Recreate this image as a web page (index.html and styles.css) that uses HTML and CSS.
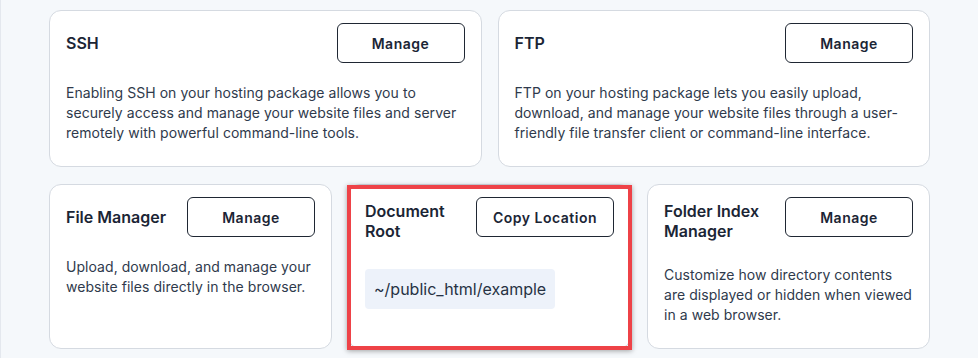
FILE: index.html
```html
<!DOCTYPE html>
<html lang="en">
<head>
    <meta charset="UTF-8">
    <meta name="viewport" content="width=device-width, initial-scale=1.0">
    <title>Hosting Tools</title>
    <link rel="stylesheet" href="styles.css">
</head>
<body>
    <div class="page">
        <!-- Linha 1: acesso remoto -->
        <div class="row row-two">
            <div class="card">
                <div class="card-head">
                    <h3 class="card-title">SSH</h3>
                    <button class="btn btn-wide">Manage</button>
                </div>
                <p class="card-text">Enabling SSH on your hosting package allows you to securely access and manage your website files and server remotely with powerful command-line tools.</p>
            </div>
            <div class="card">
                <div class="card-head">
                    <h3 class="card-title">FTP</h3>
                    <button class="btn btn-wide">Manage</button>
                </div>
                <p class="card-text">FTP on your hosting package lets you easily upload, download, and manage your website files through a user-friendly file transfer client or command-line interface.</p>
            </div>
        </div>

        <!-- Linha 2: arquivos -->
        <div class="row row-three">
            <div class="card">
                <div class="card-head">
                    <h3 class="card-title">File Manager</h3>
                    <button class="btn btn-wide">Manage</button>
                </div>
                <p class="card-text">Upload, download, and manage your website files directly in the browser.</p>
            </div>
            <div class="card highlight">
                <div class="card-head">
                    <h3 class="card-title">Document Root</h3>
                    <button class="btn">Copy Location</button>
                </div>
                <div class="path">~/public_html/example</div>
            </div>
            <div class="card">
                <div class="card-head">
                    <h3 class="card-title">Folder Index Manager</h3>
                    <button class="btn btn-wide">Manage</button>
                </div>
                <p class="card-text">Customize how directory contents are displayed or hidden when viewed in a web browser.</p>
            </div>
        </div>
    </div>
</body>
</html>
```

FILE: styles.css
```css
body {
    font-family: 'Inter', 'Noto Sans', sans-serif;
    background-color: #f5f8fb;
    margin: 0;
    padding: 0;
    border-left: 1px solid #e4e8ee;
    min-height: 358px;
    box-sizing: border-box;
}

.page {
    width: 881px;
    padding: 10px 0 0 48px;
    display: flex;
    flex-direction: column;
    gap: 17px;
}

.row {
    display: grid;
    gap: 16px;
}

.row-two {
    grid-template-columns: 1fr 1fr;
}

.row-three {
    grid-template-columns: 1fr 1fr 1fr;
}

.card {
    position: relative;
    background-color: #fff;
    border: 1px solid #d5dae1;
    border-radius: 12px;
    padding: 12px 16px 23px;
}

.card-head {
    display: flex;
    justify-content: space-between;
    align-items: center;
    gap: 16px;
}

.card-title {
    margin: 4px 0;
    font-size: 16px;
    line-height: 20px;
    font-weight: 600;
    color: #1b2535;
}

.btn {
    align-self: flex-start;
    flex-shrink: 0;
    height: 40px;
    padding: 0 16px;
    background-color: #fff;
    border: 1px solid #1f2733;
    border-radius: 6px;
    font-family: inherit;
    font-size: 14px;
    font-weight: 600;
    letter-spacing: 0.5px;
    color: #1b2535;
    cursor: pointer;
}

.btn-wide {
    width: 128px;
}

.card-text {
    margin: 20px 0 0;
    font-size: 14px;
    line-height: 20px;
    letter-spacing: 0.05px;
    color: #2f3a4c;
}

.path {
    display: inline-block;
    margin-top: 24px;
    padding: 8px 9px;
    font-size: 16px;
    line-height: 24px;
    color: #273244;
    background-color: #edf2fa;
    border-radius: 4px;
}

/* marcação em volta do card */
.highlight::after {
    content: '';
    position: absolute;
    top: 0;
    left: -2px;
    right: -2px;
    bottom: -2px;
    border: 4px solid #ee4247;
    box-shadow: 0 1px 5px rgba(0,0,0,0.35);
    pointer-events: none;
}
```
